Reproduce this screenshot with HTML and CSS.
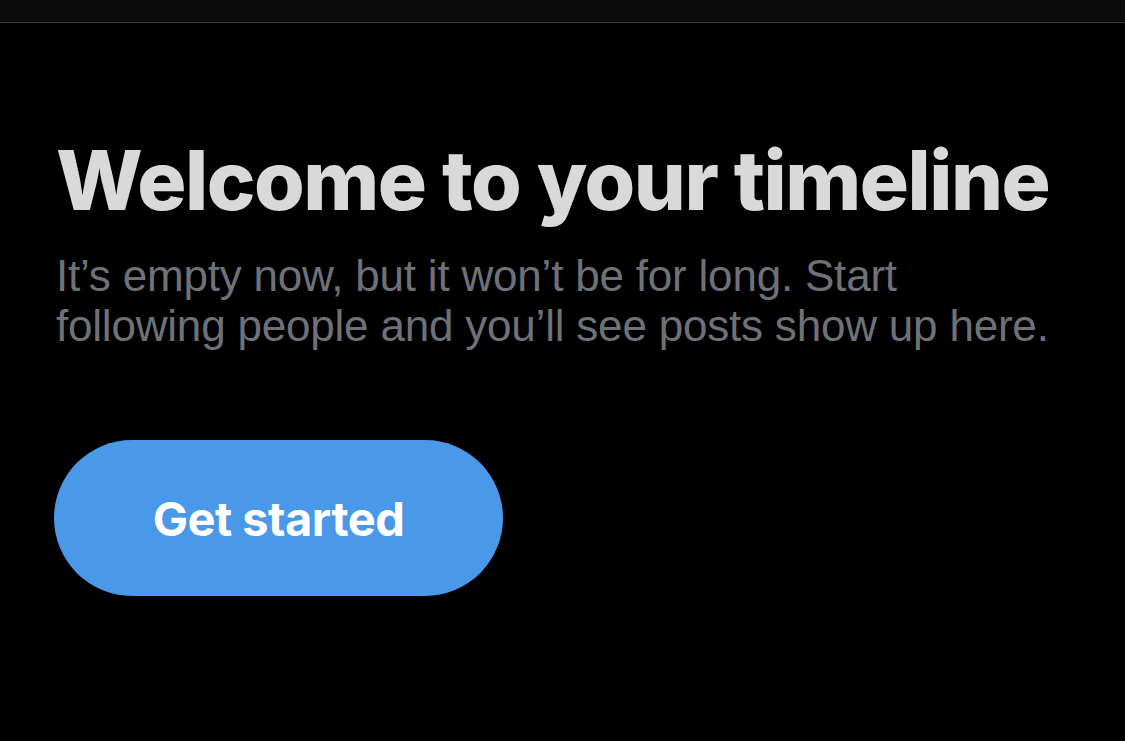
FILE: index.html
```html
<!DOCTYPE html>
<html lang="en">
<head>
<meta charset="utf-8">
<title>Welcome to your timeline</title>
<link rel="stylesheet" href="styles.css">
</head>
<body>
<div class="topbar"></div>
<main class="empty">
  <h1 class="title">Welcome to your timeline</h1>
  <p class="sub">It’s empty now, but it won’t be for long. Start following people and you’ll see posts show up here.</p>
  <button class="cta">Get started</button>
</main>
</body>
</html>
```
FILE: styles.css
```css
html, body {
  margin: 0;
  padding: 0;
  background: #000;
  height: 100%;
  overflow: hidden;
}
body {
  font-family: "Liberation Sans", Arial, sans-serif;
}
.topbar {
  height: 22px;
  background: #0b0b0b;
  border-bottom: 1px solid #3a3a3a;
}
.empty {
  padding: 108px 0 0 56px;
  display: flex;
  flex-direction: column;
  align-items: flex-start;
}
.title {
  margin: 0;
  font-family: Inter, "Liberation Sans", sans-serif;
  font-size: 82px;
  line-height: 100px;
  font-weight: 800;
  color: #d9d9d9;
  letter-spacing: -1.5px;
}
.sub {
  margin: 20px 0 0;
  width: 1010px;
  font-size: 44px;
  line-height: 50px;
  color: #6e7278;
  font-weight: 400;
  letter-spacing: -0.2px;
}
.cta {
  margin: 89px 0 0 -2px;
  width: 449px;
  height: 156px;
  border: none;
  border-radius: 78px;
  background: #4a99e8;
  color: #fff;
  font-family: Inter, "Liberation Sans", sans-serif;
  font-size: 47px;
  font-weight: 700;
  letter-spacing: -0.5px;
  padding: 0;
}
```
